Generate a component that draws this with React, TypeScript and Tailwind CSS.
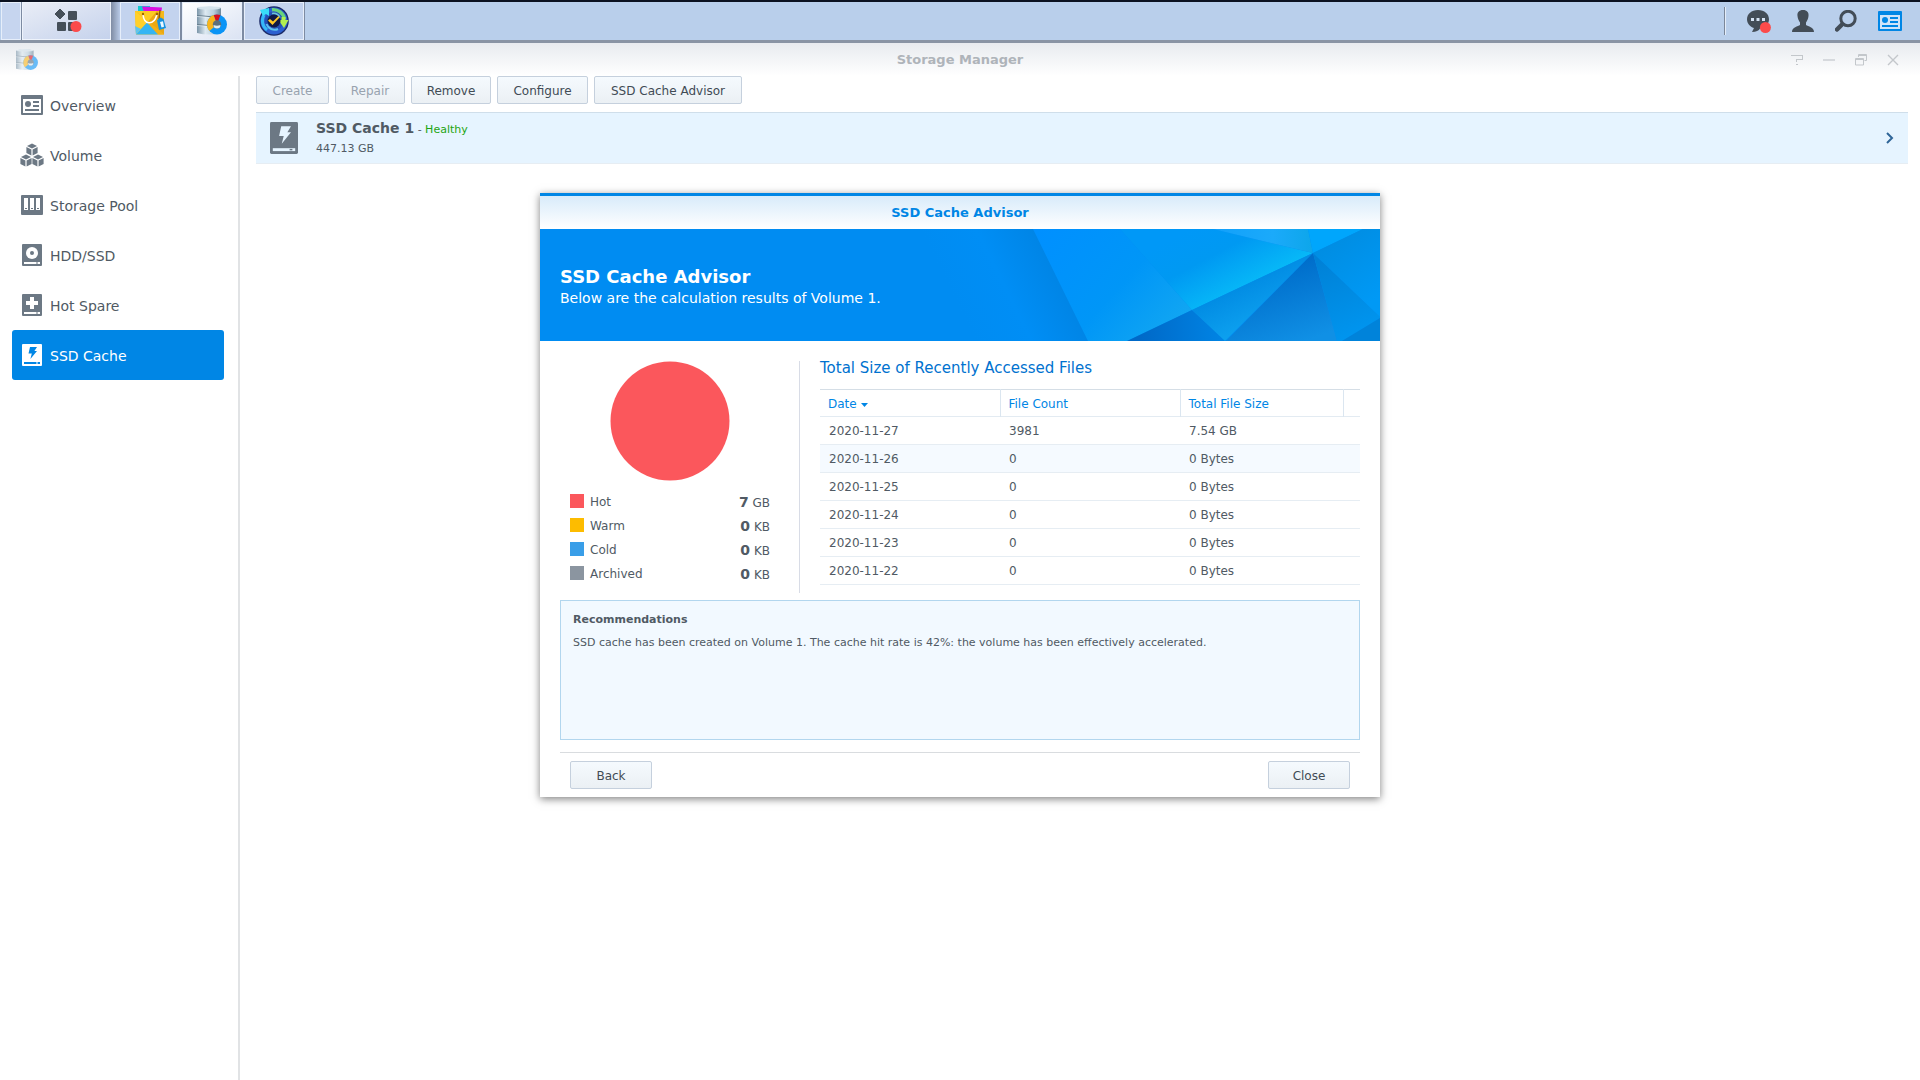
import type { ReactNode } from 'react';

interface NavItem {
  label: string;
  icon: ReactNode;
}

interface LegendItem {
  label: string;
  value: number;
  unit: string;
  swatch: string;
}

function OverviewIcon() {
  return (
    <svg width="22" height="20" viewBox="0 0 22 20" aria-hidden="true">
      <rect width="22" height="20" rx="1" fill="#6c7884" />
      <path d="M2 4h18v14H2z" fill="#fff" />
      <circle cx="7" cy="9" r="3" fill="#6c7884" />
      <path d="M12 6h6v2h-6zM12 10h6v2h-6zM4 14h14v2H4z" fill="#6c7884" />
    </svg>
  );
}

function VolumeIcon() {
  return (
    <svg width="24" height="24" viewBox="0 0 24 24" aria-hidden="true">
      {[
        [12, 0.5],
        [6, 11.5],
        [18, 11.5],
      ].map(([x, y]) => (
        <g key={`${x}-${y}`} transform={`translate(${x} ${y})`} fill="#6c7884">
          <path d="M0 0l5 2.500L0 5l-5-2.500z" />
          <path d="M-5.600 3.600l5 2.500v5.800l-5-2.500zM5.600 3.600l-5 2.500v5.800l5-2.500z" />
        </g>
      ))}
    </svg>
  );
}

function PoolIcon() {
  return (
    <svg width="22" height="20" viewBox="0 0 22 20" aria-hidden="true">
      <rect width="22" height="20" rx="1" fill="#6c7884" />
      <path d="M3 3h4v12H3zM9 3h4v12H9zM15 3h4v12h-4z" fill="#fff" />
      <path d="M4 13h2v1H4zM10 13h2v1h-2zM16 13h2v1h-2z" fill="#6c7884" />
    </svg>
  );
}

function DriveIcon({ large, body, mark, children }: { large?: boolean; body: string; mark: string; children: ReactNode }) {
  return (
    <svg width={large ? 28 : 20} height={large ? 32 : 22} viewBox="0 0 20 22" preserveAspectRatio="none" aria-hidden="true">
      <rect width="20" height="22" rx="1" fill={body} />
      {children}
      <path d="M2 18h16v2H2z" fill={mark} />
      <path d="M14 18.500h2v1h-2z" fill={body} />
    </svg>
  );
}

function StorageManagerIcon({ size }: { size: number }) {
  return (
    <svg width={size} height={size} viewBox="0 0 30 30" aria-hidden="true">
      <defs>
        <linearGradient id="cylinder">
          <stop offset="0" stopColor="#7b95a8" />
          <stop offset="0.35" stopColor="#dde9f1" />
          <stop offset="0.7" stopColor="#b9cfdd" />
          <stop offset="1" stopColor="#6f8798" />
        </linearGradient>
      </defs>
      <path d="M0 2Q12-1 24 2V27Q12 30 0 27z" fill="url(#cylinder)" />
      <ellipse cx="12" cy="2" rx="12" ry="1.6" fill="#d5e3ec" />
      <path d="M0 9.5q12 2 24 0M0 18.5q12 2 24 0" stroke="#667d8d" strokeWidth="1" fill="none" />
      <path d="M0 10.5q12 2 24 0M0 19.5q12 2 24 0" stroke="#edf5fa" strokeWidth="0.6" fill="none" />
      <circle cx="20" cy="18.5" r="10" fill="#0b94f6" />
      <path d="M20 18.5L16.6 9.1A10 10 0 0 1 23.4 9.1z" fill="#d9101f" />
      <path d="M20 18.5L16.6 9.1A10 10 0 0 0 12.4 25z" fill="#f9b51b" />
      <circle cx="20" cy="18.5" r="4.2" fill="#5d6f7c" />
      <path d="M16.5 19q3.500 1.600 7 0a3.500 3.500 0 0 1-7 0z" fill="#dcebf4" />
    </svg>
  );
}

function PackageCenterIcon() {
  return (
    <svg width="31" height="30" viewBox="0 0 31 30" aria-hidden="true">
      <path d="M3 0h12v7H3z" fill="#12c9cf" />
      <path d="M7 0.5l20 1-1 7H10z" fill="#d80fe0" />
      <path d="M0 5h29v23.500H1z" fill="#f3b91c" />
      <path d="M0 5l29 23.500V14L22 5z" fill="#eaa812" />
      <path d="M0 5h22l-9 10.500z" fill="#fccb22" />
      <path d="M0 5l13 10.500L1 28.500z" fill="#ffd02a" />
      <path d="M13 15.500l16 13H23L12 17z" fill="#f2b016" />
      <path d="M1 28.500L12 16.500l11 12z" fill="#34b5f4" />
      <path d="M0 20l6 3-5 5.500z" fill="#5cc4f2" />
      <path d="M8 8.500c1 11 11 11 14 0" stroke="#fff" strokeWidth="1.6" fill="none" />
      <circle cx="8" cy="8" r="1.2" fill="#9b6400" />
      <circle cx="22" cy="8" r="1.2" fill="#9b6400" />
      <path d="M25 4l-1 9" stroke="#8d5a09" strokeWidth="1.4" />
      <path d="M22 14.500l3-3 3.500 1.500 2.500 9-7 2z" fill="#1592df" />
      <path d="M25 16l3-.7 1 5.500-2.500.6z" fill="#e9f7ff" />
    </svg>
  );
}

function BackupIcon() {
  return (
    <svg width="30" height="30" viewBox="0 0 30 30" aria-hidden="true">
      <circle cx="15" cy="15" r="14.8" fill="#1b2a66" />
      <circle cx="15" cy="15" r="13.500" fill="#2b5fd0" />
      <circle cx="15" cy="15" r="9.500" fill="#2450b4" />
      <path d="M8 24A11.500 11.500 0 0 1 5 9" stroke="#35b8f7" strokeWidth="3" fill="none" />
      <path d="M13 3.700A11.500 11.500 0 0 1 25.500 13" stroke="#69d47c" strokeWidth="3.4" fill="none" />
      <path d="M13 7.500A7.500 7.500 0 0 1 21 11.500" stroke="#6cc4d8" strokeWidth="1.6" fill="none" />
      <path d="M7.500 18A8.500 8.500 0 0 0 19 23" stroke="#5cc0f0" strokeWidth="2" fill="none" />
      <path d="M1 4l9-2v8L7 8 4 10z" fill="#38dcf8" />
      <path d="M19.500 14h3v-3h4v3h3l-4.500 8z" fill="#b2ef50" />
      <circle cx="15" cy="15" r="6.500" fill="#101a45" />
      <path d="M9 14.500l2-1.500 3 2.500 5.500-5.500 1 1.500-7 7.500z" fill="#ffc928" />
    </svg>
  );
}

function MainMenuIcon() {
  return (
    <svg className="ml-0.5" width="28" height="26" viewBox="0 0 28 26" aria-hidden="true">
      <path d="M6 1L11 6 6 11 1 6z" fill="#454f59" stroke="#454f59" strokeLinejoin="round" />
      <rect x="14" y="3" width="9" height="9" rx="1" fill="#454f59" />
      <rect x="3" y="14" width="9" height="9" rx="1" fill="#454f59" />
      <rect x="14" y="14" width="9" height="9" rx="1" fill="#454f59" />
      <circle cx="22" cy="18.5" r="5.5" fill="#fb4b4b" />
    </svg>
  );
}

const BOLT = 'M8 3h7l-2.6 4H15L8.4 15l1.4-5.4H6.5z';

const NAV_ITEMS: NavItem[] = [
  { label: 'Overview', icon: <OverviewIcon /> },
  { label: 'Volume', icon: <VolumeIcon /> },
  { label: 'Storage Pool', icon: <PoolIcon /> },
  {
    label: 'HDD/SSD',
    icon: (
      <DriveIcon body="#6c7884" mark="#fff">
        <circle cx="10" cy="9" r="6" fill="#fff" />
        <circle cx="10" cy="9" r="2" fill="#6c7884" />
      </DriveIcon>
    ),
  },
  {
    label: 'Hot Spare',
    icon: (
      <DriveIcon body="#6c7884" mark="#fff">
        <path d="M8 3h4v4h4v4h-4v4H8v-4H4V7h4z" fill="#fff" />
      </DriveIcon>
    ),
  },
  {
    label: 'SSD Cache',
    icon: (
      <DriveIcon body="#fff" mark="#0086e5">
        <path d={BOLT} fill="#0086e5" />
      </DriveIcon>
    ),
  },
];

const TOOLBAR = [
  { label: 'Create', disabled: true, width: 'w-[73px]' },
  { label: 'Repair', disabled: true, width: 'w-[70px]' },
  { label: 'Remove', disabled: false, width: 'w-[80px]' },
  { label: 'Configure', disabled: false, width: 'w-[91px]' },
  { label: 'SSD Cache Advisor', disabled: false, width: 'w-[148px]' },
];

const LEGEND: LegendItem[] = [
  { label: 'Hot', value: 7, unit: 'GB', swatch: 'bg-[#fb575c]' },
  { label: 'Warm', value: 0, unit: 'KB', swatch: 'bg-[#fdbc00]' },
  { label: 'Cold', value: 0, unit: 'KB', swatch: 'bg-[#399ee8]' },
  { label: 'Archived', value: 0, unit: 'KB', swatch: 'bg-[#8b95a0]' },
];

const FILE_ROWS = [
  { date: '2020-11-27', count: 3981, size: '7.54 GB' },
  { date: '2020-11-26', count: 0, size: '0 Bytes' },
  { date: '2020-11-25', count: 0, size: '0 Bytes' },
  { date: '2020-11-24', count: 0, size: '0 Bytes' },
  { date: '2020-11-23', count: 0, size: '0 Bytes' },
  { date: '2020-11-22', count: 0, size: '0 Bytes' },
];

const BUTTON =
  'h-7 rounded-[2px] border border-[#c5d0dd] bg-linear-to-b from-[#f5fafe] to-[#ebf0f4] pt-0.5 text-xs text-[#414b55] disabled:text-[#98a3af]';

function Taskbar() {
  const app = 'flex w-[60px] items-center justify-center border border-[#e6eefa]';
  return (
    <header className="flex h-[43px] border-t-2 border-b-3 border-t-[#0b1220] border-b-[#8994a4] bg-[#b9cfeb] pl-px">
      <div className="w-5 border border-[#e6eefa] bg-[#c6d5ef]" />
      <div className="w-px bg-[#7d8ba2]" />
      <button
        aria-label="Main Menu"
        className="flex w-[89px] items-center justify-center border border-[#eef3fb] bg-linear-to-br from-[#e9edf6] to-[#c5d2ec]"
      >
        <MainMenuIcon />
      </button>
      <div className="w-[9px] bg-linear-to-r from-[#7f8ca3] to-[#b9cbe8]" />
      <div className="flex gap-0.5 bg-[#7d8ba2] pr-px">
        <button aria-label="Package Center" className={`${app} bg-[#c3d3ee]`}>
          <PackageCenterIcon />
        </button>
        <button aria-label="Storage Manager" className={`${app} bg-linear-to-br from-[#fff] to-[#dbe3f3]`}>
          <StorageManagerIcon size={30} />
        </button>
        <button aria-label="Hyper Backup" className={`${app} bg-[#c3d3ee]`}>
          <BackupIcon />
        </button>
      </div>
      <div className="mr-[18px] ml-auto flex items-center gap-[21px]">
        <div className="h-7 w-0.5 border-r border-l border-r-[#e4edf9] border-l-[#7b8799]" />
        <button aria-label="Notifications">
          <svg width="24" height="24" viewBox="0 0 24 24" aria-hidden="true">
            <path d="M11 1C4.500 1 0 5 0 10.300c0 4.200 3 7.600 7 8.800L5 23c4 0 7-1.500 8-3.500 5.500-.7 9-4.500 9-9.200C22 5 17.500 1 11 1z" fill="#434d57" />
            <path d="M4 9h3v3H4zM9.500 9h3v3h-3zM15 9h3v3h-3z" fill="#d5e3f4" />
            <circle cx="18.400" cy="18.500" r="5.500" fill="#fb4b4b" />
          </svg>
        </button>
        <button aria-label="Options">
          <svg width="22" height="22" viewBox="0 0 22 22" aria-hidden="true">
            <path d="M11 0c4 0 6 2.500 5.500 6-.2 3-1.500 5-2.500 6.500V15c2 1.500 8 2 8 7H0c0-5 6-5.500 8-7v-2.500C7 11 5.700 9 5.500 6 5 2.500 7 0 11 0z" fill="#434d57" />
          </svg>
        </button>
        <button aria-label="Search">
          <svg width="22" height="22" viewBox="0 0 22 22" aria-hidden="true">
            <circle cx="13" cy="8.500" r="7.200" fill="none" stroke="#434d57" strokeWidth="3" />
            <path d="M8 13.500l-2 2" stroke="#434d57" strokeWidth="2.500" />
            <path d="M6.500 15L2 19.500" stroke="#434d57" strokeWidth="4.500" strokeLinecap="round" />
          </svg>
        </button>
        <button aria-label="Widgets">
          <svg width="24" height="20" viewBox="0 0 24 20" aria-hidden="true">
            <rect width="24" height="20" rx="1" fill="#0086e5" />
            <path d="M2 4h20v14H2z" fill="#cfe3f8" />
            <circle cx="7" cy="9" r="3" fill="#0086e5" />
            <path d="M12 6h8v2h-8zM12 10h8v2h-8zM4 14h16v2H4z" fill="#0086e5" />
          </svg>
        </button>
      </div>
    </header>
  );
}

function TitleBar() {
  return (
    <div className="grid h-[33px] grid-cols-3 items-center bg-linear-to-b from-[#e8ebef] to-white px-4">
      <div className="opacity-60">
        <StorageManagerIcon size={22} />
      </div>
      <h1 className="text-center text-[13px] font-bold text-[#afb4ba]">Storage Manager</h1>
      <div className="flex items-center justify-end gap-5 pr-[5px]">
        <button aria-label="Help">
          <svg width="12" height="12" viewBox="0 0 12 12" fill="#c3c7cb" aria-hidden="true">
            <path d="M0 1h12v5H6v2H5V5h6V2H0zM5 10h2v1H5z" />
          </svg>
        </button>
        <button aria-label="Minimize">
          <svg width="12" height="12" viewBox="0 0 12 12" aria-hidden="true">
            <path d="M0 5.500h12v1H0z" fill="#b9bdc2" />
          </svg>
        </button>
        <button aria-label="Restore">
          <svg width="12" height="12" viewBox="0 0 12 12" fill="none" stroke="#c3c7cb" aria-hidden="true">
            <path d="M3.500 3V.5h8v6H9.500M.5 4.500h8v6.500h-8zM.5 5.500h8M3.500 1.500h8" />
          </svg>
        </button>
        <button aria-label="Close window">
          <svg width="12" height="12" viewBox="0 0 12 12" stroke="#c3c7cb" strokeWidth="1.400" aria-hidden="true">
            <path d="M1 1l10 10M11 1L1 11" />
          </svg>
        </button>
      </div>
    </div>
  );
}

function Sidebar() {
  return (
    <nav className="w-60 shrink-0 border-r-2 border-[#e1e3e5] pt-1 pr-3.5 pl-3">
      {NAV_ITEMS.map((item) => (
        <a
          key={item.label}
          href="#"
          className={
            item.label === 'SSD Cache'
              ? 'flex h-[50px] items-center rounded-[3px] bg-[#0086e5] px-2 text-sm text-white'
              : 'flex h-[50px] items-center rounded-[3px] px-2 text-sm text-[#505a64]'
          }
        >
          <span className="mr-1.5 flex w-6 justify-center">{item.icon}</span>
          <span className="pt-0.5">{item.label}</span>
        </a>
      ))}
    </nav>
  );
}

function Banner() {
  return (
    <div className="relative h-28 overflow-hidden bg-[#008cf2]">
      <svg className="absolute top-0 right-0" width="840" height="112" viewBox="0 0 840 112" aria-hidden="true">
        <defs>
          <linearGradient id="facetA" gradientUnits="userSpaceOnUse" x1="430" y1="101" x2="521" y2="56">
            <stop offset="0" stopColor="#008cf2" />
            <stop offset="0.5" stopColor="#008ef5" />
            <stop offset="1" stopColor="#0085e6" />
          </linearGradient>
          <linearGradient id="facetB" gradientUnits="userSpaceOnUse" x1="500" y1="0" x2="620" y2="110">
            <stop offset="0" stopColor="#0090ff" />
            <stop offset="0.6" stopColor="#0096f7" />
            <stop offset="1" stopColor="#10a5f2" />
          </linearGradient>
          <linearGradient id="facetC" gradientUnits="userSpaceOnUse" x1="650" y1="0" x2="690" y2="75">
            <stop offset="0" stopColor="#0098f7" />
            <stop offset="0.4" stopColor="#0099f2" />
            <stop offset="1" stopColor="#08bdf8" />
          </linearGradient>
          <linearGradient id="facetD" gradientUnits="userSpaceOnUse" x1="700" y1="50" x2="720" y2="90">
            <stop offset="0" stopColor="#0089e2" />
            <stop offset="1" stopColor="#0c9fee" />
          </linearGradient>
          <linearGradient id="facetE" gradientUnits="userSpaceOnUse" x1="740" y1="40" x2="765" y2="112">
            <stop offset="0" stopColor="#006ecb" />
            <stop offset="1" stopColor="#1090e5" />
          </linearGradient>
          <linearGradient id="facetF" gradientUnits="userSpaceOnUse" x1="600" y1="112" x2="680" y2="112">
            <stop offset="0" stopColor="#0069c8" />
            <stop offset="1" stopColor="#0083e3" />
          </linearGradient>
          <linearGradient id="facetG" gradientUnits="userSpaceOnUse" x1="790" y1="10" x2="835" y2="70">
            <stop offset="0" stopColor="#008de2" />
            <stop offset="1" stopColor="#0099f5" />
          </linearGradient>
          <linearGradient id="facetH" gradientUnits="userSpaceOnUse" x1="780" y1="30" x2="815" y2="112">
            <stop offset="0" stopColor="#0081d6" />
            <stop offset="1" stopColor="#0096f0" />
          </linearGradient>
          <linearGradient id="facetI" x1="0" y1="0" x2="1" y2="0">
            <stop offset="0" stopColor="#12a0fa" />
            <stop offset="0.6" stopColor="#1baafa" />
            <stop offset="1" stopColor="#0da6ea" />
          </linearGradient>
        </defs>
        <path d="M380 0h114l55 112H380z" fill="url(#facetA)" />
        <path d="M493 0h87l72 81-65 31h-39z" fill="url(#facetB)" />
        <path d="M580 0h93l100 24-121 57z" fill="url(#facetC)" />
        <path d="M673 0h95l5 24z" fill="url(#facetI)" />
        <path d="M768 0h55l-50 24z" fill="#00a6fc" />
        <path d="M823 0h17v88L773 24z" fill="url(#facetG)" />
        <path d="M652 81l35 31H587z" fill="url(#facetF)" />
        <path d="M652 81l121-57-88 88z" fill="url(#facetD)" />
        <path d="M773 24l24 88H686z" fill="url(#facetE)" />
        <path d="M773 24l67 64v1l-38 23h-5z" fill="url(#facetH)" />
        <path d="M802 112l38-23v23z" fill="#0083da" />
      </svg>
      <div className="relative px-5 pt-9 text-white">
        <h3 className="text-lg leading-6 font-bold">SSD Cache Advisor</h3>
        <p className="text-sm leading-[18px]">Below are the calculation results of Volume 1.</p>
      </div>
    </div>
  );
}

function UsageChart() {
  return (
    <section className="w-60 shrink-0 border-r border-[#d8dce6] pr-[29px] pl-2.5">
      <svg className="mx-auto" width="120" height="120" viewBox="0 0 120 120" role="img" aria-label="Hot 100%">
        <circle cx="60" cy="60" r="59.500" fill="#fb575c" />
      </svg>
      <ul className="mt-2">
        {LEGEND.map((item) => (
          <li key={item.label} className="flex h-6 items-center text-xs">
            <span className={`mr-1.5 size-3.5 ${item.swatch}`} />
            <span className="pt-0.5">{item.label}</span>
            <span className="ml-auto pt-0.5">
              <b className="text-sm">{item.value}</b> {item.unit}
            </span>
          </li>
        ))}
      </ul>
    </section>
  );
}

function FileTable() {
  const head = 'border-r border-[#dbe6f0] px-2 pt-0.5 text-left font-normal text-[#0086e5]';
  return (
    <section className="min-w-0 flex-1 pl-5">
      <h4 className="mb-3.5 text-[15px] leading-[14px] text-[#0072cf]">Total Size of Recently Accessed Files</h4>
      <table className="w-full table-fixed border-t border-[#d5dee6] text-xs">
        <thead>
          <tr className="h-[27px] border-b border-[#e3ebf2]">
            <th className={`${head} w-[180px]`}>
              Date
              <svg className="ml-1 inline" width="7" height="4" viewBox="0 0 7 4" aria-hidden="true">
                <path d="M0 0h7L3.500 4z" fill="#0086e5" />
              </svg>
            </th>
            <th className={`${head} w-[180px]`}>File Count</th>
            <th className={`${head} w-[163px]`}>Total File Size</th>
            <td />
          </tr>
        </thead>
        <tbody>
          {FILE_ROWS.map((row) => (
            <tr key={row.date} className="h-7 border-b border-[#e6edf3] nth-2:bg-[#f5faff]">
              <td className="px-[9px]">{row.date}</td>
              <td className="px-[9px]">{row.count}</td>
              <td className="px-[9px]">{row.size}</td>
              <td />
            </tr>
          ))}
        </tbody>
      </table>
    </section>
  );
}

function AdvisorDialog() {
  return (
    <div
      role="dialog"
      aria-labelledby="advisor-title"
      className="w-[840px] border-t-3 border-[#0086e5] bg-white text-[#505a64] shadow-[0_2px_8px_rgba(0,0,0,0.5)]"
    >
      <h2
        id="advisor-title"
        className="flex h-[33px] items-center justify-center bg-linear-to-b from-[#d8ebfa] to-white text-[13px] font-bold text-[#0086e5]"
      >
        SSD Cache Advisor
      </h2>
      <Banner />
      <div className="px-5 pt-5 pb-2">
        <div className="flex h-[232px]">
          <UsageChart />
          <FileTable />
        </div>
        <section className="mt-[7px] h-[140px] border border-[#b2d6ee] bg-[#f2f9ff] px-3 pt-2.5 text-[11px]">
          <h4 className="leading-[18px] font-bold">Recommendations</h4>
          <p className="mt-1 leading-5">
            SSD cache has been created on Volume 1. The cache hit rate is 42%: the volume has been effectively accelerated.
          </p>
        </section>
        <footer className="mt-3 flex justify-between border-t border-[#d9dcdf] px-2.5 pt-2">
          <button className={`${BUTTON} w-[82px]`}>Back</button>
          <button className={`${BUTTON} w-[82px]`}>Close</button>
        </footer>
      </div>
    </div>
  );
}

export default function App() {
  return (
    <div className="relative flex min-h-screen flex-col bg-white font-['Verdana','DejaVu_Sans',sans-serif]">
      <Taskbar />
      <TitleBar />
      <div className="flex flex-1">
        <Sidebar />
        <main className="min-w-0 flex-1 pr-3 pl-4">
          <div className="flex gap-1.5">
            {TOOLBAR.map((b) => (
              <button key={b.label} disabled={b.disabled} className={`${BUTTON} ${b.width}`}>
                {b.label}
              </button>
            ))}
          </div>
          <div className="mt-2 flex h-[52px] items-center border-t border-b border-t-[#cfdeea] border-b-[#e6edf3] bg-[#e6f4ff] px-3.5 text-[11px] text-[#505a64]">
            <DriveIcon large body="#6c7884" mark="#e6f4ff">
              <path d={BOLT} fill="#e6f4ff" />
            </DriveIcon>
            <div className="ml-[18px]">
              <div className="leading-[19px]">
                <b className="text-sm leading-[19px]">SSD Cache 1</b> - <span className="text-[#1ea511]">Healthy</span>
              </div>
              <div className="leading-[19px]">447.13 GB</div>
            </div>
            <svg className="ml-auto" width="8" height="12" viewBox="0 0 8 12" aria-hidden="true">
              <path d="M1 1l5 5-5 5" fill="none" stroke="#2f6598" strokeWidth="2" />
            </svg>
          </div>
        </main>
      </div>
      <div className="absolute inset-x-0 top-[193px] flex justify-center">
        <AdvisorDialog />
      </div>
    </div>
  );
}
